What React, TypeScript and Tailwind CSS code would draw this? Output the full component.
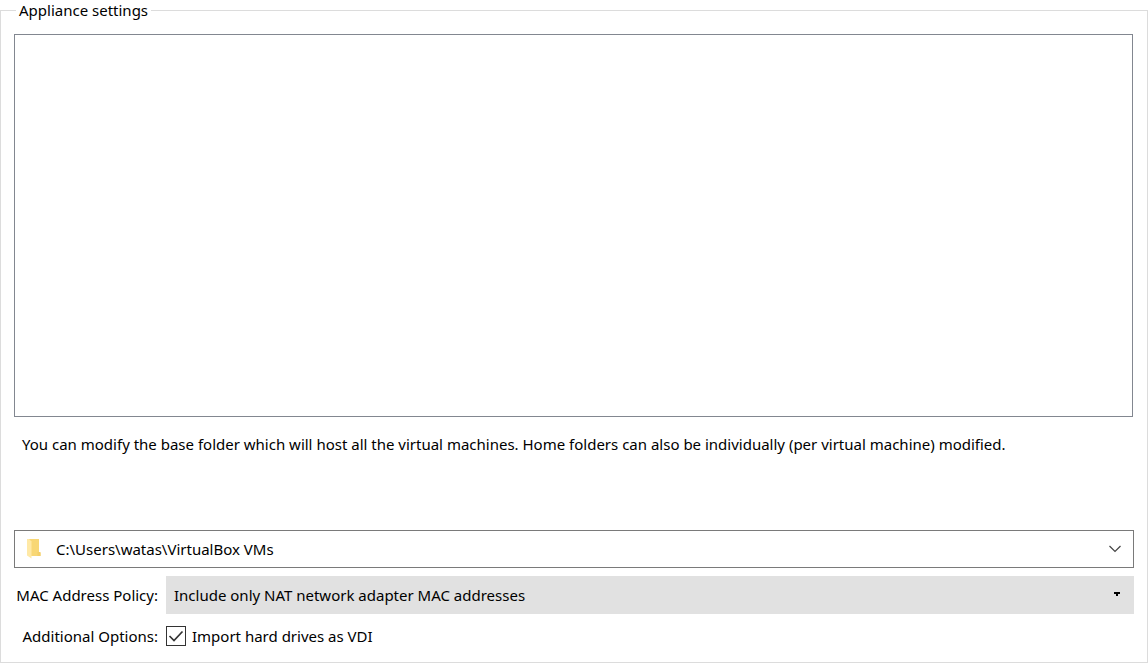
import { useState } from "react";

function FolderIcon() {
  return (
    <svg viewBox="0 0 16 22" className="h-[22px] w-4" aria-hidden="true">
      <path d="M3 1H13V14L14.500 15V18H3Z" fill="#f8d775" />
      <path d="M11.500 14H14.500V18H11.500Z" fill="#f3cf6b" />
      <path d="M1 1H3L5.500 3.500V20.500L1 17.500Z" fill="#ffe9a6" />
    </svg>
  );
}

export default function App() {
  const [asVdi, setAsVdi] = useState(true);

  return (
    <main className="flex min-h-screen flex-col bg-white pb-px font-['Noto_Sans','Open_Sans',sans-serif] text-[15px] leading-5 text-black">
      <fieldset className="min-w-0 flex-1 border border-[#dcdcdc] px-[13px] pb-4">
        <legend className="ml-0.5 h-5 px-[3px]">Appliance settings</legend>

        <div
          role="tree"
          aria-label="Appliance settings"
          className="mr-px mt-3.5 h-[calc(100vh-281px)] min-h-40 border border-[#828790] bg-white"
        />

        <p className="mb-19 mt-[17px] px-2">
          You can modify the base folder which will host all the virtual machines. Home folders can
          also be individually (per virtual machine) modified.
        </p>

        <div className="relative">
          <select
            aria-label="Base folder"
            className="block h-[38px] w-full appearance-none border border-[#7a7a7a] bg-white pl-[41px] pr-10"
          >
            <option>C:\Users\watas\VirtualBox VMs</option>
          </select>
          <span className="pointer-events-none absolute inset-y-0 left-3 flex items-center">
            <FolderIcon />
          </span>
          <span className="pointer-events-none absolute inset-y-0 right-3 flex items-center">
            <svg viewBox="0 0 14 8" className="h-2 w-3.5" aria-hidden="true">
              <path d="M1.500 1L7 6.500L12.500 1" fill="none" stroke="#444" strokeWidth="1.200" />
            </svg>
          </span>
        </div>

        <div className="mt-2 grid grid-cols-[144px_1fr] items-center gap-x-2 gap-y-3">
          <label htmlFor="mac-policy" className="whitespace-nowrap text-right">
            MAC Address Policy:
          </label>
          <div className="relative">
            <select
              id="mac-policy"
              className="block h-[38px] w-full appearance-none bg-[#e1e1e1] pl-2 pr-10"
            >
              <option>Include only NAT network adapter MAC addresses</option>
            </select>
            <span className="pointer-events-none absolute inset-y-0 right-3.5 flex items-center pb-0.5">
              <svg viewBox="0 0 6 4" className="h-1 w-1.5" shapeRendering="crispEdges" aria-hidden="true">
                <path d="M0 0H6V2H4V4H2V2H0Z" fill="#000" />
              </svg>
            </span>
          </div>

          <span className="whitespace-nowrap text-right">Additional Options:</span>
          <label className="flex items-center gap-1.5">
            <span className="relative flex">
              <input
                type="checkbox"
                checked={asVdi}
                onChange={(e) => setAsVdi(e.target.checked)}
                className="peer size-5 appearance-none border border-[#333] bg-white"
              />
              <svg
                viewBox="0 0 20 20"
                className="pointer-events-none absolute inset-0 hidden size-5 peer-checked:block"
                aria-hidden="true"
              >
                <path d="M3.500 10L8 14.500L16.500 5.500" fill="none" stroke="#333" strokeWidth="1.700" />
              </svg>
            </span>
            Import hard drives as VDI
          </label>
        </div>
      </fieldset>
    </main>
  );
}
